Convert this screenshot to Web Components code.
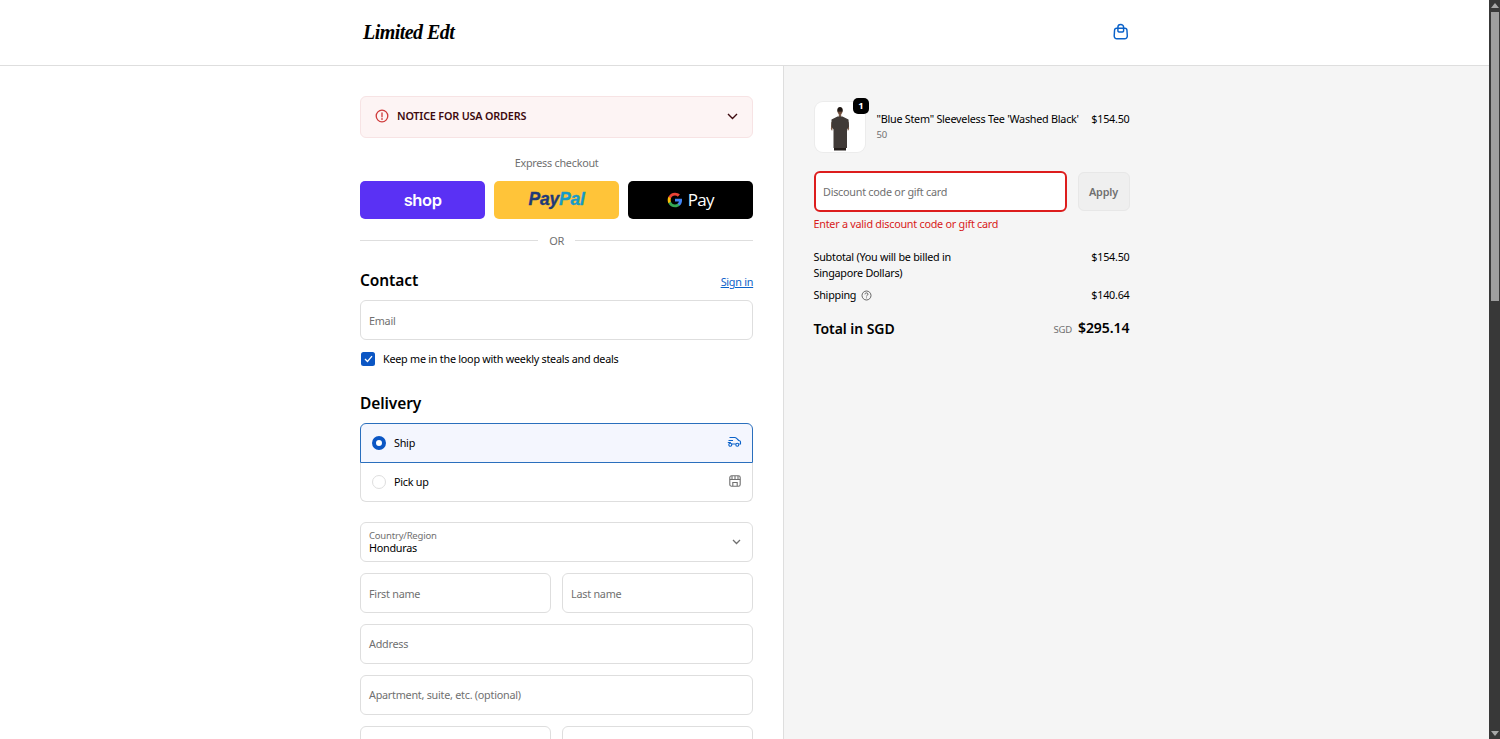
<!DOCTYPE html>
<html lang="en"><head><meta charset="utf-8"><title>Checkout</title>
<style>
html,body{margin:0;height:739px;overflow:hidden;background:#fff}
body{font-family:"Noto Sans","Open Sans",sans-serif;font-size:10.8px;letter-spacing:-.25px;color:#000;display:flex}
</style></head><body>
<checkout-page></checkout-page>
<fake-scrollbar></fake-scrollbar>
<script>
const def=(name,html)=>customElements.define(name,class extends HTMLElement{
  connectedCallback(){ if(this.shadowRoot) return; const r=this.attachShadow({mode:'open'}); r.innerHTML=typeof html==='function'?html(this):html; }
});
const FONT='"Noto Sans","Open Sans",sans-serif';
def('fake-scrollbar',`<style>
:host{display:flex;flex:none;width:11px;height:739px;background:#383838;flex-direction:column;align-items:center;box-sizing:border-box}
.u,.d{flex:none;height:12px;display:flex;align-items:center;justify-content:center}
.t{width:8px;height:289px;background:#9e9e9e;flex:none}
.s{flex:1}
</style><div class="u"><svg width="8" height="6" viewBox="0 0 8 6"><path d="M4 0 8 5H0z" fill="#a8a8a8"/></svg></div><div class="t"></div><div class="s"></div><div class="d"><svg width="8" height="6" viewBox="0 0 8 6"><path d="M4 6 8 1H0z" fill="#a8a8a8"/></svg></div>`);

def('site-header',`<style>
:host{display:block;height:65px;border-bottom:1px solid #dedede;background:#fff}
.w{width:770px;margin-left:360px;height:65px;display:flex;align-items:center;justify-content:space-between}
.logo{font:italic 700 20px/1 "Liberation Serif",serif;letter-spacing:-.55px;color:#000;margin-left:3px;white-space:nowrap;position:relative;top:-1px}
svg{display:block;margin-right:2px;position:relative;top:-1px}
</style><div class="w"><span class="logo">Limited Edt</span>
<svg width="15.500" height="17.500" viewBox="0 0 18 20" fill="none" stroke="#0b62c9" stroke-width="1.700"><path d="M4.200 6h9.600c1.300 0 2.300 1 2.400 2.200l.4 6.600c.1 1.900-1.300 3.400-3.100 3.400H4.500c-1.800 0-3.200-1.500-3.100-3.400l.4-6.600C1.900 7 2.900 6 4.200 6z"/><path d="M5.700 9V4.600C5.700 2.800 7.200 1.500 9 1.500s3.300 1.300 3.300 3.100V9c0 .9-1.400 1.400-3.300 1.400S5.700 9.900 5.700 9z"/></svg></div>`);

def('notice-banner',`<style>
:host{display:flex;align-items:center;height:42px;box-sizing:border-box;background:#fdf4f4;border:1px solid #f7e3e4;border-radius:6px;padding:0 14px;font:600 10.800px ${FONT};letter-spacing:-.18px;color:#3d0a0f}
svg.a{margin-right:8px;flex:none;position:relative;top:-1px}
span{flex:1;position:relative;top:-1px}
</style><svg class="a" width="14" height="14" viewBox="0 0 14 14" fill="none" stroke="#cf3b3b" stroke-width="1.300"><circle cx="7" cy="7" r="5.800"/><path d="M7 3.800v3.900M7 9.500v.9" stroke-linecap="round"/></svg><span><slot></slot></span>
<svg width="11" height="7" viewBox="0 0 11 7" fill="none" stroke="#3d0a0f" stroke-width="1.400"><path d="M1 1l4.500 4.500L10 1"/></svg>`);

def('express-checkout',`<style>
:host{display:block;margin-top:16.900px}
.t{text-align:center;color:#707070;line-height:16px}
.r{display:grid;grid-template-columns:repeat(3,1fr);gap:8.800px;margin-top:10.500px}
.b{height:37.700px;border-radius:5px;display:flex;align-items:center;justify-content:center}
.shop{background:#5a31f4;color:#fff;font:600 16.500px/1 Inter,${FONT};letter-spacing:-.4px}
.pp{background:#ffc439;font:italic 700 17.500px/1 "Liberation Sans",sans-serif;letter-spacing:-.2px;color:#1f3a78;-webkit-text-stroke:.35px currentColor}
.pp i{color:#179bc9}
.gp{background:#000;color:#fff;gap:4.500px;font:400 17px/1 "Open Sans",sans-serif;letter-spacing:-.6px}
.gp svg{display:block}
.or{display:flex;align-items:center;gap:11px;margin-top:14.200px;color:#707070;line-height:16px;font-size:11px}
.or u{flex:1;height:1px;background:#dedede}
</style><div class="t">Express checkout</div>
<div class="r"><div class="b shop">shop</div><div class="b pp"><span>Pay<i>Pal</i></span></div><div class="b gp"><svg width="16" height="16" viewBox="0 0 24 24"><path fill="#4285F4" d="M22.560 12.250c0-.78-.07-1.530-.2-2.250H12v4.260h5.920c-.26 1.370-1.040 2.530-2.210 3.310v2.770h3.570c2.080-1.920 3.280-4.740 3.280-8.090z"/><path fill="#34A853" d="M12 23c2.970 0 5.460-.98 7.280-2.660l-3.570-2.770c-.98.66-2.230 1.060-3.710 1.060-2.860 0-5.290-1.930-6.160-4.530H2.180v2.840C3.990 20.530 7.700 23 12 23z"/><path fill="#FBBC05" d="M5.840 14.090c-.22-.66-.35-1.360-.35-2.090s.13-1.430.35-2.090V7.070H2.180C1.430 8.550 1 10.220 1 12s.43 3.450 1.180 4.930l3.660-2.840z"/><path fill="#EA4335" d="M12 5.380c1.620 0 3.060.56 4.210 1.640l3.150-3.150C17.450 2.090 14.970 1 12 1 7.700 1 3.990 3.470 2.180 7.070l3.660 2.840c.87-2.600 3.300-4.530 6.160-4.530z"/></svg><span>Pay</span></div></div>
<div class="or"><u></u><span>OR</span><u></u></div>`);

def('section-head',el=>`<style>
:host{display:flex;justify-content:space-between;align-items:flex-end;height:24px}
h2{margin:0;font:600 15.500px/24px ${FONT};letter-spacing:-.1px;color:#000}
a{color:#0b62c9;text-decoration:underline;line-height:16px;margin-bottom:2px}
</style><h2>${el.getAttribute('title')}</h2>${el.getAttribute('link')?`<a href="#">${el.getAttribute('link')}</a>`:''}`);

def('text-field',el=>`<style>
:host{display:block;min-width:0}
.f{height:var(--fh,39.700px);box-sizing:border-box;border:1px solid #dedede;border-radius:6px;background:#fff;padding:0 8px;display:flex;align-items:center;color:#707070;white-space:nowrap}
:host([error]) .f{border:2px solid #dd1d1d;padding:0 7.500px;height:40.600px}
</style><div class="f">${el.getAttribute('placeholder')}</div>`);

def('select-field',el=>`<style>
:host{display:block}
.f{height:39.700px;box-sizing:border-box;border:1px solid #dedede;border-radius:6px;background:#fff;padding:0 11px 0 8px;display:flex;align-items:center;justify-content:space-between}
.l{font-size:9.500px;line-height:12px;color:#707070;letter-spacing:-.2px}.v{line-height:12.500px;color:#000}
</style><div class="f"><div><div class="l">${el.getAttribute('label')}</div><div class="v">${el.getAttribute('value')}</div></div>
<svg width="9" height="6" viewBox="0 0 9 6" fill="none" stroke="#707070" stroke-width="1.300"><path d="M1 1l3.500 3.500L8 1"/></svg></div>`);

def('check-row',`<style>
:host{display:flex;align-items:center;gap:8px;color:#000;margin-top:10.700px;height:16px;margin-left:1px}
.c{width:14px;height:14px;border-radius:2.500px;background:#0b56c4;display:flex;align-items:center;justify-content:center;flex:none}
</style><div class="c"><svg width="9" height="8" viewBox="0 0 9 8" fill="none" stroke="#fff" stroke-width="1.300"><path d="M1 4l2.500 2.500L8 1.200"/></svg></div><span><slot></slot></span>`);

def('delivery-options',`<style>
:host{display:block;margin-top:8.600px}
.o{box-sizing:border-box;display:flex;align-items:center;padding:0 10px 0 11px;gap:8px;background:#fff}
.o span{flex:1}
.a{height:39.500px;background:#f4f6fe;border:1px solid #2a6fbd;border-radius:6px 6px 0 0}
.b{height:39px;border:1px solid #dedede;border-top:0;border-radius:0 0 6px 6px}
.r{width:14px;height:14px;border-radius:50%;box-sizing:border-box;flex:none}
.a .r{border:4.500px solid #0b56c4;background:#fff}
.b .r{border:1px solid #dedede;background:#fff}
svg{display:block}
</style><div class="o a"><div class="r"></div><span>Ship</span>
<svg width="15" height="12" viewBox="0 0 15 12" fill="none" stroke="#0b62c9" stroke-width="1.100" style="position:relative;top:-1px"><path d="M2.500 1.500h5.200c.8 0 1.400.3 1.900.8l2.100 2.200 1 .3c.5.200.8.600.8 1.100v2.100h-1.200M8.700 8h-4M1.500 4.500h4.500M.8 6.500h3"/><circle cx="3.300" cy="8.800" r="1.500"/><circle cx="10.300" cy="8.800" r="1.500"/></svg></div>
<div class="o b"><div class="r"></div><span>Pick up</span>
<svg width="12" height="12" viewBox="0 0 12 12" fill="none" stroke="#707070" stroke-width="1.100" style="position:relative;top:-1px;margin-right:1.500px"><rect x=".8" y=".8" width="10.400" height="10.400" rx="1.800"/><path d="M.8 4.500h10.400M3 1v3.500M6 1v3.500M9 1v3.500M3.800 11V7.500h4.400V11"/></svg></div>`);

def('order-line',`<style>
:host{display:flex;align-items:flex-start;gap:11px;height:51px}
.im{position:relative;width:50px;height:50.500px;margin-left:1px;margin-right:1px;background:#fff;border-radius:8px;flex:none;box-shadow:0 0 0 1px #ececec}
.im svg{display:block}
.bd{position:absolute;right:-4.500px;top:-3.500px;width:16px;height:16px;border-radius:5px;background:#000;color:#fff;font:700 9.500px/16px ${FONT};letter-spacing:0;text-align:center}
.n{flex:1;padding-top:9.500px;line-height:16px;white-space:nowrap}
.s{font-size:9.500px;color:#707070;line-height:14px;margin-top:1px}
.p{padding-top:9.500px;line-height:16px}
</style><div class="im"><svg width="50" height="50" viewBox="0 0 50 50"><path d="M22.500 9c0-2 1-3.200 2.500-3.200S27.500 7 27.500 9s-1 3.500-2.500 3.500S22.500 11 22.500 9z" fill="#6e4c3a"/><path d="M22.300 8.300c0-2.200 1.200-3.300 2.700-3.300s2.700 1.100 2.700 3.300z" fill="#1d1511"/><rect x="22.300" y="8.300" width="5.400" height="1.200" fill="#111"/><rect x="23.800" y="12" width="2.400" height="3" fill="#7a5a48"/><path d="M16.300 20l-.4 7 1.200 2 1.500-8zM33.700 20l.4 7-1.200 2-1.500-8z" fill="#7a5a48"/><path d="M16.500 17.500l6-3h5l6 3 .5 7-2 3v18.500H18.500V27.500l-2-3z" fill="#403a37"/><path d="M19 46h12v2.500H19z" fill="#231d1a"/></svg><div class="bd">1</div></div>
<div class="n">"Blue Stem" Sleeveless Tee 'Washed Black'<div class="s">50</div></div><div class="p">$154.50</div>`);

def('discount-form',`<style>
:host{display:block;margin-top:18.700px}
.r{display:flex;gap:10.500px;align-items:flex-start}
text-field{flex:1}
.b{width:52px;height:39.500px;margin-top:.5px;box-sizing:border-box;border:1px solid #e7e7e7;background:#efefef;border-radius:6px;color:#707070;font:600 10.800px/37.500px ${FONT};letter-spacing:-.15px;text-align:center}
.e{color:#d81b1b;line-height:16px;margin-top:4.500px}
</style><div class="r"><text-field error placeholder="Discount code or gift card"></text-field><div class="b">Apply</div></div><div class="e">Enter a valid discount code or gift card</div>`);

def('order-totals',`<style>
:host{display:block;margin-top:16.500px}
.r{display:flex;justify-content:space-between;line-height:16.500px}
.l{width:170px}
.ship{margin-top:5.500px}
.ship svg{vertical-align:-1.500px;margin-left:5px}
.tot{margin-top:14px;align-items:center;line-height:20px}
.tot b{font:600 14px/20px ${FONT};letter-spacing:-.05px}
.tot small{font-size:9.500px;color:#707070;margin-right:6px}
</style><div class="r"><span class="l">Subtotal (You will be billed in Singapore Dollars)</span><span>$154.50</span></div>
<div class="r ship"><span>Shipping<svg width="11" height="11" viewBox="0 0 11 11" fill="none" stroke="#555" stroke-width=".9"><circle cx="5.500" cy="5.500" r="4.500"/><path d="M4 4.300c0-.9.700-1.400 1.500-1.400s1.500.5 1.500 1.300c0 1-1.500 1-1.500 2.200M5.500 7.500v.8"/></svg></span><span>$140.64</span></div>
<div class="r tot"><b>Total in SGD</b><span><small>SGD</small><b>$295.14</b></span></div>`);

def('checkout-form',`<style>
:host{display:block;width:393.200px;margin-left:360px;padding-top:29.700px}
section-head.c{margin-top:19.100px}
section-head.d{margin-top:24px}
.f{display:grid;grid-template-columns:1fr 1fr;gap:11.200px 11px;margin-top:11.300px}
.w{grid-column:1/3}
text-field.e{margin-top:8.300px;--fh:39.500px}
select-field{margin-top:20.600px}
</style><notice-banner>NOTICE FOR USA ORDERS</notice-banner><express-checkout></express-checkout>
<section-head class="c" title="Contact" link="Sign in"></section-head>
<text-field class="e" placeholder="Email"></text-field>
<check-row>Keep me in the loop with weekly steals and deals</check-row>
<section-head class="d" title="Delivery"></section-head>
<delivery-options></delivery-options>
<select-field label="Country/Region" value="Honduras"></select-field>
<div class="f"><text-field placeholder="First name"></text-field><text-field placeholder="Last name"></text-field>
<text-field class="w" placeholder="Address"></text-field><text-field class="w" placeholder="Apartment, suite, etc. (optional)"></text-field>
<text-field placeholder=""></text-field><text-field placeholder=""></text-field></div>`);

def('order-summary',`<style>
:host{display:block;background:#f5f5f5;border-left:1px solid #dedede;padding:35.500px 0 0 29.500px;box-sizing:border-box;min-height:0;overflow:hidden}
.w{width:316px}
</style><div class="w"><order-line></order-line><discount-form></discount-form><order-totals></order-totals></div>`);

def('checkout-page',`<style>
:host{display:flex;flex-direction:column;flex:1;min-width:0;height:739px;overflow:hidden}
.g{display:grid;grid-template-columns:783px 1fr;flex:1;min-height:0}
.l{overflow:hidden;min-height:0}
</style><site-header></site-header><div class="g"><div class="l"><checkout-form></checkout-form></div><order-summary></order-summary></div>`);
</script></body></html>
